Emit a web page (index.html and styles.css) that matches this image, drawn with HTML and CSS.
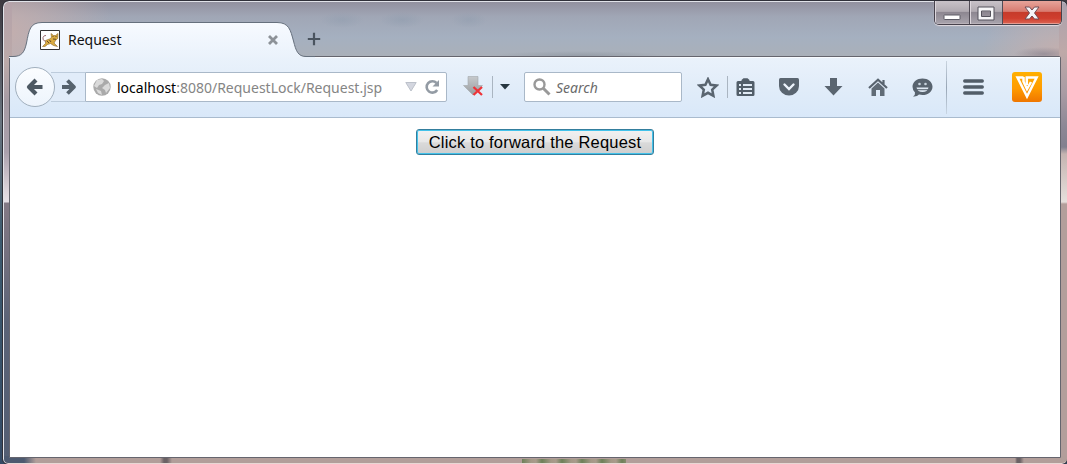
FILE: index.html
```html
<!DOCTYPE html>
<html lang="en">
<head>
<meta charset="utf-8">
<title>Request</title>
<link rel="stylesheet" href="styles.css">
</head>
<body>
<div class="window">
  <header class="titlebar">
    <div class="tab">
      <svg class="tab-shape" width="306" height="37" viewBox="0 0 306 37">
        <defs><linearGradient id="tabFill" x1="0" y1="0" x2="0" y2="1"><stop offset="0" stop-color="#f7faff"/><stop offset="1" stop-color="#eaf2fb"/></linearGradient></defs>
        <path d="M0 37V35.500H4C13 35.500 15.500 31 17.500 22C20 9 21 1.500 33 1.500H268C280 1.500 281.500 9 284.500 20C287 30 289 35.500 297 35.500H306V37Z" fill="url(#tabFill)"/>
        <path d="M0 35.500H4C13 35.500 15.500 31 17.500 22C20 9 21 1.500 33 1.500H268C280 1.500 281.500 9 284.500 20C287 30 289 35.500 297 35.500H306" fill="none" stroke="#66707d"/>
      </svg>
      <svg class="favicon" width="20" height="20" viewBox="0 0 20 20">
        <path d="M.5.5h19v19H.5z" fill="#fff" stroke="#333"/>
        <path d="M2.500 16.500l3-3 0-3 4-1.500 2-1.500-.5-4 2.500 2h2l2.500-2-.3 5-2.200 2-1.500 2.500 3.500 3.500-4-1-3-2-3 1-2.500 2z" fill="#d9ab40" stroke="#8d6a2a" stroke-width=".6"/>
        <path d="M5.500 11.500Q2 10 3 7.500T6 5.500" fill="none" stroke="#9a6b70"/>
        <path d="M12.500 6.500h1M15.500 6.500h1M13 9l3 .3M7 11l2 2M9.500 10l1.500 2" fill="none" stroke="#684b28"/>
      </svg>
      <span class="tab-title">Request</span>
      <svg class="tab-close" width="12" height="12" viewBox="0 0 12 12"><path d="M2 2l8 8M10 2l-8 8" stroke="#8d9298" stroke-width="2.800"/></svg>
    </div>
    <svg class="new-tab" width="14" height="14" viewBox="0 0 14 14"><path d="M7 .8v12.400M.8 7h12.400" stroke="#4a545f" stroke-width="2.200"/></svg>
    <div class="controls">
      <div class="control minimize"><svg width="18" height="7" viewBox="0 0 18 7"><rect x="1" y="1" width="16" height="4.500" rx=".5" fill="#fff" stroke="#5c5b65"/></svg></div>
      <div class="control maximize"><svg width="18" height="15" viewBox="0 0 18 15"><path d="M1 1h16v13H1zM4.500 5v5.500h9V5z" fill="#f6f6f8" fill-rule="evenodd" stroke="#54535c"/></svg></div>
      <div class="control close"><svg width="16" height="14" viewBox="0 0 16 14"><path d="M1 1h4.500L8 4l2.500-3H15l-4.500 6 4.500 6h-4.500L8 10l-2.500 3H1l4.500-6z" fill="#f5f5f8" stroke="#714c54"/></svg></div>
    </div>
  </header>
  <main class="browser">
    <nav class="toolbar">
      <div class="back"><svg width="20" height="20" viewBox="0 0 20 20"><path d="M11 3L4 10l7 7M5 10h12.500" fill="none" stroke="#4d5963" stroke-width="4.200" stroke-linejoin="round"/></svg></div>
      <div class="forward"><svg width="16" height="18" viewBox="0 0 16 18"><path d="M6.500 2.500l6.500 6.500-6.500 6.500M1 9h11" fill="none" stroke="#56626d" stroke-width="3.800" stroke-linejoin="round"/></svg></div>
      <div class="address">
        <svg class="globe" width="18" height="18" viewBox="0 0 18 18"><circle cx="9" cy="9" r="8.700" fill="#aaa"/><path d="M4 2l5-1 2 2-2 3-3 1-2 3-3-2zM12 7l4-2 1 5-4 5-1-3-3-2zM3 11l5 2 1 4-4-2z" fill="#dadada"/></svg>
        <span class="url"><b>localhost</b>:8080/RequestLock/Request.jsp</span>
        <svg class="drop" width="12" height="10" viewBox="0 0 12 10"><path d="M.8.5h10.400L6 9z" fill="#d3d6df" stroke="#bcc1ca"/></svg>
        <svg class="reload" width="15" height="16" viewBox="0 0 15 16"><path d="M12.200 11A5.700 5.700 0 1 1 11.500 4" fill="none" stroke="#939ba4" stroke-width="2.600"/><path d="M14 1v6.500H7.500z" fill="#939ba4"/></svg>
      </div>
      <svg class="grab" width="22" height="21" viewBox="0 0 22 21"><defs><linearGradient id="gray" x1="0" y1="0" x2="0" y2="1"><stop offset="0" stop-color="#c6c9cc"/><stop offset="1" stop-color="#989c9f"/></linearGradient></defs><path d="M5 .5h10v9h4.500L10 19 .5 9.500H5z" fill="url(#gray)" stroke="#a2a7ab" stroke-width=".6"/><path d="M10.500 11l8.500 8M19 11l-8.500 8" stroke="#ee3338" stroke-width="2.300"/></svg>
      <i class="rule rule-grab"></i>
      <svg class="caret" width="10" height="6" viewBox="0 0 10 6"><path d="M0 0h10L5 5.500z" fill="#263640"/></svg>
      <div class="search"><svg width="18" height="18" viewBox="0 0 18 18"><circle cx="6.500" cy="6.500" r="5" fill="none" stroke="#999" stroke-width="2.400"/><path d="M10.500 10.500l6 6" stroke="#999" stroke-width="3"/></svg><span>Search</span></div>
      <svg class="star" width="22" height="21" viewBox="0 0 22 21"><path d="M11 2.200l2.600 5.600 6 .7-4.400 4.100 1.200 6.200L11 15.800l-5.400 3 1.200-6.200-4.400-4.100 6-.7z" fill="none" stroke="#5a6570" stroke-width="2.500"/></svg>
      <i class="rule rule-star"></i>
      <svg class="list" width="19" height="19" viewBox="0 0 19 19"><path d="M5.500 3V2L7.500.3h4L13.500 2v1H17q1.500 0 1.500 1.500v12Q18.500 18 17 18H2Q.5 18 .5 16.500v-12Q.5 3 2 3z" fill="#525e69"/><path d="M3 6h2v2H3zM7 6h9v2H7zM3 10h2v2H3zM7 10h9v2H7zM3 14h2v2H3zM7 14h9v2H7z" fill="#e0eaf4"/></svg>
      <svg class="pocket" width="20" height="18" viewBox="0 0 20 18"><path d="M1.500 0h17Q20 0 20 1.500V8a10 9.500 0 0 1-20 0V1.500Q0 0 1.500 0z" fill="#5a6570"/><path d="M5.500 6.500L10 11l4.500-4.500" fill="none" stroke="#edf4fc" stroke-width="2.400" stroke-linecap="round"/></svg>
      <svg class="download" width="19" height="18" viewBox="0 0 19 18"><path d="M6 0h7v8h5.500l-9 9.500L.5 8H6z" fill="#5a6570"/></svg>
      <svg class="home" width="20" height="18" viewBox="0 0 20 18"><path d="M1 10L10 1.800 19 10M15.500 2v4" fill="none" stroke="#58636e" stroke-width="2.200"/><path d="M3.500 10.500L10 4.500l6.500 6V18H12v-6H8v6H3.500z" fill="#606b76"/></svg>
      <svg class="chat" width="21" height="19" viewBox="0 0 21 19"><path d="M10.500.5C16 .5 20.500 4 20.500 8.700S16 17 10.500 17L7 16.500Q5 19 1 18.500q2.500-1.500 2-4Q.5 12 .5 8.700C.5 4 5 .5 10.500.5z" fill="#58636e"/><path d="M4.500 9.500h12q-1 4.500-6 4.500t-6-4.500z" fill="#dfe9f3"/><path d="M5 11.700h11" stroke="#58636e"/><circle cx="7.500" cy="6" r="1.300" fill="#c8d3de"/><circle cx="13.500" cy="6" r="1.300" fill="#c8d3de"/></svg>
      <i class="rule rule-menu"></i>
      <svg class="menu" width="21" height="16" viewBox="0 0 21 16"><path d="M1.700 2h17.600M1.700 8h17.600M1.700 14h17.600" stroke="#525d68" stroke-width="3.300" stroke-linecap="round"/></svg>
      <div class="vbadge"><svg width="30" height="30" viewBox="0 0 30 30"><path d="M11.500 5.500H5.500L15 24.500 24.600 5.500H14.800V13" fill="none" stroke="#fff" stroke-width="2.500"/><path d="M11.500 5v4.500L15 17l4-7" fill="none" stroke="#fff" stroke-width="2.500"/></svg></div>
    </nav>
    <section class="page"><button class="submit" type="button">Click to forward the Request</button></section>
  </main>
</div>
</body>
</html>
```
FILE: styles.css
```css
* { box-sizing: border-box; }
body {
  margin: 0;
  height: 464px;
  padding: 1px 0 0 3px;
  overflow: hidden;
  background: linear-gradient(#3d3940, #69747f 120px, #3c5a6e 240px, #344a65);
  font-family: "Noto Sans", "Open Sans", sans-serif;
}
svg { display: block; flex: none; }
.window {
  height: 463px;
  padding: 0 6px 6px;
  border: 1px solid #e1e3e9;
  border-right-width: 0;
  border-bottom-color: #e8d8d5;
  border-radius: 6px 6px 5px 5px;
  outline: 1px solid #303039;
  background:
    repeating-linear-gradient(90deg, #6d8058 0, #a49886 9px, #a99b8c 14px, #6d8058 20px) 518px 100% / 104px 4px no-repeat,
    linear-gradient(90deg, #4d5a70 0, #4d5a70 20px, #b29e9a 32px, #b29e9a 156px, #6b6265 160px, #6b6265 163px, #b29e9a 168px, #b29e9a 1011px, #6b6265 1013px, #6b6265 1016px, #b29e9a 1020px) 0 100% / 100% 7px no-repeat,
    linear-gradient(#b5a3aa, #bba9a9 60px, #a69ba4 100px, #aaa0ac 150px, #ddd5dc 190px, #e5dfe5 200px, #837985 201px, #75717f 250px, #5b6377 320px, #535e73) 0 0 / 8px 100% no-repeat,
    linear-gradient(#aaa1ad, #bea9a8 50px, #aa9ca4 90px, #8c8795 125px, #82808f 145px, #c5b4b1 152px, #e6dfdc 200px, #b39e9b 202px) 100% 0 / 8px 100% no-repeat,
    radial-gradient(ellipse 22px 8px at 398px 18px, #8d9bad80, transparent),
    radial-gradient(ellipse 18px 8px at 465px 18px, #8d9bad70, transparent),
    radial-gradient(ellipse 22px 8px at 338px 18px, #8d9bad70, transparent),
    radial-gradient(ellipse 90px 5px at 575px 54px, #818a9680, transparent),
    radial-gradient(ellipse 30px 7px at 1040px 52px, #77738280, transparent),
    radial-gradient(ellipse 110px 80px at 0 30px, #c4aead, transparent),
    radial-gradient(ellipse 80px 55px at 1058px 50px, #c3afae, transparent),
    linear-gradient(#92919f, #a0a6b5 14px, #a5b0c0 35px, #aab0b9 55px);
}
.titlebar { display: flex; height: 54px; align-items: flex-start; position: relative; z-index: 1; }
.tab { position: relative; display: flex; align-items: center; width: 298px; height: 36px; margin-top: 19px; padding-left: 31px; margin-left: -1px; }
.tab-shape { position: absolute; left: 0; top: 0; z-index: -1; }
.tab-title { margin-left: 8px; width: 200px; font-size: 14px; line-height: 20px; color: #111; }
.favicon, .tab-title, .tab-close { margin-top: 1px; }
.tab-close { margin-left: -1px; }
.new-tab { margin: 30px 0 0 0; }
.controls { display: flex; width: 128px; height: 24px; margin: -1px -1px 0 auto; border: 1px solid #47424c; border-top: 0; border-radius: 0 0 5px 5px; overflow: hidden; box-shadow: 0 1px 1px #e3dce1; }
.control { display: flex; justify-content: center; align-items: center; border-right: 1px solid #514c56; box-shadow: inset 1px 0 #ddd7dd, inset 0 -1px #b9b2b9; background: linear-gradient(#c8c2c8, #b0aab1 45%, #8d8791 50%, #a9a4ad); }
.minimize { width: 35px; padding-top: 9px; }
.maximize { width: 33px; padding-top: 1px; }
.close { flex: 1; border: 0; background: linear-gradient(#e7a49a, #d87b70 45%, #c63b2b 50%, #cf3e2e 75%, #dc6654); box-shadow: inset 0 -1px #e69b90; }
.browser { height: 402px; margin-left: -1px; width: 1052px; border: 1px solid #65656e; border-radius: 2px 2px 0 0; background: #fff; }
.toolbar { display: flex; align-items: center; height: 61px; padding-left: 5px; border-bottom: 1px solid #a9bbce; background: linear-gradient(#eaf2fb, #e2edf9 45%, #d9e8f9); box-shadow: inset 0 1px #f8fbff; }
.back { display: flex; align-items: center; justify-content: center; width: 40px; height: 40px; border: 1px solid #a1afbd; border-radius: 50%; background: linear-gradient(#fbfdff, #edf4fc); position: relative; z-index: 1; }
.forward { display: flex; align-items: center; justify-content: flex-end; width: 34px; height: 30px; margin-left: -4px; padding-right: 8px; border: 1px solid #bdccdc; border-width: 1px 0; background: #e1ecf9; }
.address, .search { display: flex; align-items: center; height: 30px; border: 1px solid #a9b8c8; border-radius: 0 2px 2px 0; background: #fff; }
.address { width: 362px; }
.globe { margin-left: 7px; }
.url { width: 288px; margin-left: 6px; font-size: 14px; white-space: nowrap; color: #858585; }
.url b { font-weight: 400; color: #000; }
.reload { margin-left: 8px; }
.grab { margin-left: 16px; margin-top: -1px; }
.rule { width: 1px; height: 22px; background: #aab5c1; flex: none; }
.rule-grab { margin-left: 7px; }
.caret { margin-left: 7px; }
.search { width: 158px; margin-left: 14px; padding-left: 8px; border-radius: 2px; }
.search span { margin-left: 5px; font-size: 14px; font-style: italic; color: #6b6b6b; }
.star { margin-left: 15px; }
.rule-star { margin-left: 8px; }
.list { margin-left: 8px; }
.pocket { margin-left: 24px; }
.download { margin-left: 25px; }
.home { margin-left: 25px; }
.chat { margin-left: 24px; }
.rule-menu { height: 53px; margin-left: 13px; background: linear-gradient(#c9d4df, #98a6b6 50%, #c9d6e4); }
.menu { margin-left: 16px; }
.vbadge { margin-left: 28px; width: 30px; height: 30px; border-radius: 3px; background: linear-gradient(#ffb000, #ff9b00 55%, #ef7600); }
.page { display: flex; justify-content: center; padding-top: 11px; }
.submit { width: 238px; height: 26px; padding: 0; border: 1px solid #347e9d; border-radius: 3px; box-shadow: inset 0 0 0 1px #43c2ea; background: linear-gradient(#f1f1f1, #e7e7e7 50%, #dadada 53%, #cecece); font: 16.500px/22px "Liberation Sans", sans-serif; letter-spacing: .19px; color: #000; white-space: nowrap; }
```
